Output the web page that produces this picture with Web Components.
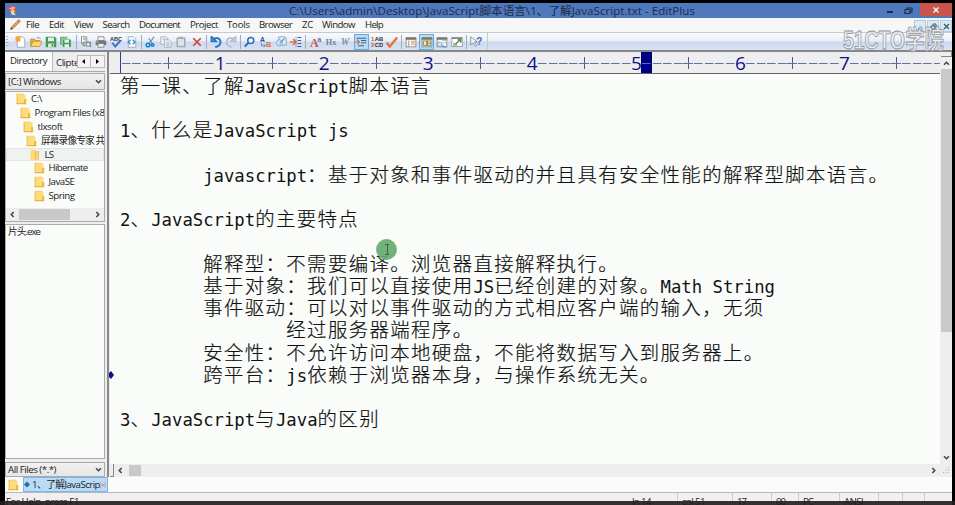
<!DOCTYPE html>
<html lang="zh-CN">
<head>
<meta charset="utf-8">
<title>EditPlus</title>
<style>
html,body{margin:0;background:#000;overflow:hidden}
body{width:955px;height:505px;font-family:"Open Sans","Noto Sans CJK SC",sans-serif;font-size:9.7px;color:#222}
</style>
</head>
<body>
<editplus-app></editplus-app>
<script>
const make = (name, html, init) => customElements.define(name, class extends HTMLElement {
  constructor(){
    super();
    const t = document.createElement('template');
    t.innerHTML = html;
    this.attachShadow({mode:'open'}).append(t.content.cloneNode(true));
  }
  connectedCallback(){ if (init && !this.ready){ this.ready = true; init(this, this.shadowRoot); } }
});

/* Label fitted to a given width, by letter spacing or (with "scale") by condensing */
make('fit-text', `<style>:host{display:inline-block;white-space:pre;flex:none}span{display:inline-block;transform-origin:0 50%}</style><span></span>`, (el, root) => {
  const s = root.querySelector('span'), w = +el.getAttribute('w');
  s.textContent = el.getAttribute('text');
  el.style.width = w + 'px';
  const own = s.getBoundingClientRect().width;
  if (el.hasAttribute('scale')) s.style.transform = `scaleX(${w / own})`;
  else s.style.letterSpacing = (w - own) / [...s.textContent].length + 'px';
});

const page = (x) => `<path d="M3 1h7l3 3v11H3z" fill="#fff" stroke="#8a9bb0"/>${x||''}`;
const win = (x) => `<rect x="1.5" y="2.5" width="13" height="12" fill="#fbfbf2" stroke="#777"/><path d="M1 2h14v3H1z" fill="#76775c"/>${x}`;
const T = (x,y,s,f,t,e) => `<text x="${x}" y="${y}" font-size="${s}" font-weight="bold" fill="${f}" ${e||''}>${t}</text>`;
const S = 'font-family="Liberation Serif"';
const ICONS = {
  new: page('<path d="M4 0v8M0 4h8M1 1l6 6M7 1L1 7" stroke="#f5a31c" stroke-width="1.5"/>'),
  open: '<path d="M1 14V4h5l1 2h6v3" fill="#e8b23d" stroke="#b5852c"/><path d="M1 14l3-7h12l-3 7z" fill="#ffd36b" stroke="#c28a24"/><path d="M9 3q3-3 5 1" fill="none" stroke="#436da8"/>',
  save: '<path d="M1 1h12l2 2v12H1z" fill="#3f9b57"/><path d="M4 2h8v5H4z" fill="#e4f5e6"/><path d="M4 10h8v5H4z" fill="#d5e9d8"/><path d="M9 11h2v3H9z" fill="#2a7139"/>',
  saveall: '<path d="M0 1h10v11H0z" fill="#70b37c"/><path d="M3 4h10l2 2v9H3z" fill="#3f9b57" stroke="#dcebdc"/><path d="M6 5h6v4H6zM6 11h6v4H6z" fill="#e5f3e6"/>',
  preview: '<path d="M2 1h7v9H2z" fill="#fff" stroke="#777"/><path d="M4 3h4M4 5h4" stroke="#888"/><path d="M4 8h10v5H4z" fill="#bbb" stroke="#777"/><circle cx="11" cy="11" r="2.5" fill="#e8f1f7" stroke="#777"/><path d="M13 13l2 2" stroke="#666"/>',
  print: '<path d="M4 1h8v5H4z" fill="#f5f5f5" stroke="#777"/><path d="M1 6h14v6H1z" fill="#73777b"/><path d="M4 10h8v5H4z" fill="#eee" stroke="#777"/><path d="M2 8h2" stroke="#ddd"/>',
  spell: T(0,7,7.5,'#36393f','ABC')+'<path d="M3 9l4 5 7-8" fill="none" stroke="#3c72c4" stroke-width="2.6"/>',
  html: page('<path d="M6 5L3 8l3 3M9 5l3 3-3 3" fill="none" stroke="#338bd0" stroke-width="1.8"/>'),
  cut: '<path d="M12 1L5 11M5 3l6 9" stroke="#6a8cb6" stroke-width="1.7"/><circle cx="4" cy="12" r="2.4" fill="none" stroke="#1682d4" stroke-width="2"/><circle cx="10" cy="12" r="1.8" fill="none" stroke="#1682d4" stroke-width="2"/>',
  copy: '<g fill="#edf1f7" stroke="#9aa7ba"><path d="M1 1h7l2 2v8H1z"/><path d="M6 5h6l3 3v7H6z"/></g><path d="M8 9h5M8 11h5M8 13h5M3 4h4" stroke="#9ab"/>',
  paste: '<path d="M3 3h10v11H3z" fill="#dfe3e9" stroke="#a6a9ae" stroke-width="2"/><path d="M5 1h6v3H5z" fill="#aaa"/>',
  delete: '<path d="M3 3l10 10M13 3L3 13" stroke="#cc4338" stroke-width="2.2"/>',
  undo: '<path d="M2 1v6h6zM4 5c5-5 10-1 10 3s-3 6-7 7" fill="none" stroke="#2978c3" stroke-width="2.6"/>',
  redo: '<path d="M14 1v6H8zM12 5C7 0 2 4 2 8s3 6 7 7" fill="none" stroke="#b4bcc9" stroke-width="2.2"/>',
  find: '<circle cx="9" cy="6" r="4" fill="#eef7ff" stroke="#286eb9" stroke-width="2"/><path d="M6 9l-5 5" stroke="#286eb9" stroke-width="2.5"/>',
  replace: T(0,8,9,'#334c82','A')+T(8,15,10,'#df724c','B')+'<path d="M2 9v4h5m-2-2l2 2-2 2" fill="none" stroke="#3474b4"/>',
  findfiles: '<path d="M5 1h8l2 2v9H5z" fill="#e2effa" stroke="#7790af"/><circle cx="6" cy="9" r="4" fill="#d9ebfa" stroke="#6490bd"/><path d="M6 10l7-7" stroke="#6fa0ca" stroke-width="2"/>',
  goto: '<path d="M0 8h7M4 4l4 4-4 4" fill="none" stroke="#e66d3b" stroke-width="2"/><path d="M10 2h5M10 6h5M10 10h5M10 14h5" stroke="#3a5d92" stroke-width="1.6"/><path d="M8 1v14" stroke="#5b79a3" stroke-dasharray="2 1"/>',
  font: T(0,15,16,'#cb514d','A',S)+T(10,8,9,'#4775b7','a'),
  hx: T(1,12,12,'#74839a','Hx',S+' textLength="14" lengthAdjust="spacingAndGlyphs"'),
  wrap: T(1,12,13,'#8090a4','W',S+' font-style="italic"'),
  indent: '<path d="M2 3h13M8 6h7M8 9h7M4 13h8" stroke="#3d648b" stroke-width="1.5"/><path d="M0 8h6M3 5l3 3-3 3" fill="none" stroke="#df6a40" stroke-width="1.5"/>',
  lines: T(0,7,8,'#d55c38','1')+T(5,7,8,'#333','AB')+T(0,15,8,'#d55c38','2')+T(5,15,8,'#333','CD'),
  check: '<path d="M1 9l4 5L15 2" fill="none" stroke="#e9733f" stroke-width="3.2"/>',
  cliptext: win('<path d="M5 6v8" stroke="#777"/><path d="M8 7h5M8 9h5M8 11h5" stroke="#d77b6c"/>'),
  dirwin: win('<path d="M3 6h10v7H3z" fill="#707451"/><path d="M4 7h3v5H4zM9 7h3v2H9zM9 10h3v2H9z" fill="#f2efb0"/>'),
  output: win('<path d="M8 6h6M8 9h6" stroke="#9ab6cc"/><circle cx="5" cy="11" r="3" fill="#d5eafa" stroke="#6b9ac8"/><path d="M8 13l5 2" stroke="#689cd1" stroke-width="2"/>'),
  browser: '<path d="M1 2h14v12H1z" fill="#fff" stroke="#888"/><path d="M1 3h14" stroke="#888" stroke-width="2"/><path d="M3 9h5v4H3z" fill="#8ab0a2"/><path d="M7 10l5-5M9 5h4v4" fill="none" stroke="#4e9a41" stroke-width="2"/>',
  help: '<path d="M1 1v11l3-3 3 5 2-1-3-5h4z" fill="#f5f7fa" stroke="#6b7e96"/>'+T(8,12,14,'#416fbd','?'),
  folder: '<path d="M2 1h10v14H2z" fill="#f4c95d"/><path d="M4 2h10v13H4z" fill="#ffdc7b"/><path d="M12 8h3v7h-3z" fill="#efb94a"/><path d="M2 14h12" stroke="#dca83c"/>',
  folderopen: '<path d="M2 1h7v14H2z" fill="#ffda75"/><path d="M8 3h5v11H8z" fill="#dfab43"/><path d="M9 2l3 2v11l-3-1z" fill="#f9d989"/>',
  pencil: '<path d="M2 14l2-4L13 1l2 2-9 9z" fill="#efae55" stroke="#77583b"/><path d="M2 14l1-3 2 2z" fill="#443"/><path d="M13 1l2 2-2 1-2-2z" fill="#d37c6d"/>',
  logo: '<path d="M1 5l5-4 8 1-1 9-7 1z" fill="#d9574d"/><path d="M3 5l6-3 3 2-4 4z" fill="#f7aaa0"/><path d="M5 9l5-2 3 8-6-1z" fill="#d8ddcc"/><path d="M10 11l4-3-1 7z" fill="#639456"/>'
};
make('ep-icon', `<style>:host{display:inline-block;width:12px;height:12px;flex:none}svg{display:block;width:100%;height:100%;font-family:"Liberation Sans",sans-serif}</style><svg viewBox="0 0 16 16"></svg>`,
  (el, root) => { root.querySelector('svg').innerHTML = ICONS[el.getAttribute('name')]; });

make('ep-arrow', `<style>:host{display:block;width:7px;height:7px;flex:none;color:#444}svg{display:block}</style><svg width="7" height="7" viewBox="0 0 7 7"><path fill="none" stroke="currentColor" stroke-width="1.5" d="M1 2.3l2.5 2.5L6 2.3"/></svg>`,
  (el, root) => { root.querySelector('svg').style.transform = `rotate(${{down:0,left:90,up:180,right:-90}[el.getAttribute('dir')]}deg)`; });

make('title-bar', `<style>
:host{display:flex;height:15px;background:#5078bc;align-items:center;color:#1d2c4a}
ep-icon{width:11px;height:11px;margin-left:2px}
fit-text{margin-left:271px;font-size:11.6px;line-height:15px}
.b{margin-left:auto;display:flex;height:15px;align-items:center}
.min{width:6px;height:2px;background:#1d2c4a;margin:3px 11px 0 0}
.x{width:32px;height:13px;background:#c9544c;display:grid;place-items:center;align-self:flex-start}
.r{margin-right:7px}
</style><ep-icon name="logo"></ep-icon><fit-text w="406" text="C:\\Users\\admin\\Desktop\\JavaScript脚本语言\\1、了解JavaScript.txt - EditPlus"></fit-text>
<div class="b"><div class="min"></div><svg class="r" width="9" height="8" viewBox="0 0 9 8"><path d="M1 2.5h5v4H1zM3 2V1h5v4H6" fill="none" stroke="#1d2c4a" stroke-width="1.2"/></svg>
<div class="x"><svg width="6" height="6" viewBox="0 0 6 6"><path d="M.5.5l5 5M5.5.5l-5 5" stroke="#fff" stroke-width="1.3"/></svg></div></div>`);

make('menu-bar', `<style>
:host{display:flex;height:14px;background:#f5f6f5;align-items:center;line-height:14px;font-size:9.6px}
ep-icon{margin:0 5px 0 4px}
nav{display:flex}
fit-text{margin-right:var(--g)}
.w{margin-left:auto;display:flex;gap:1px;align-self:flex-end}
.w div{width:12px;height:12px;background:#d9eaf8;border:1px solid #b5cadb;box-sizing:border-box;display:grid;place-items:center}
</style><ep-icon name="pencil"></ep-icon><nav></nav>
<div class="w"><div><svg width="7" height="7"><path d="M1 6h4" stroke="#456" stroke-width="1.3"/></svg></div><div><svg width="7" height="7"><path d="M1 3h4v3H1zM3 3V1h3v3H5" fill="none" stroke="#456"/></svg></div><div><svg width="7" height="7"><path d="M1 1l5 5M6 1L1 6" stroke="#456" stroke-width="1.3"/></svg></div></div>`,
(el, root) => {
  const m = [['File',26,13],['Edit',49,15],['View',74,19],['Search',102.5,27],['Document',139,41],['Project',190,28],['Tools',227,23],['Browser',259,33],['ZC',302,11],['Window',322,33],['Help',365,18]];
  root.querySelector('nav').innerHTML = m.map(([t,x,w],i) => `<fit-text text="${t}" w="${w}" style="--g:${i<10 ? m[i+1][1]-x-w : 0}px"></fit-text>`).join('');
});

make('tool-bar', `<style>
:host{display:flex;align-items:center;background:linear-gradient(#fafbfd,#e9eef8 45%,#cedaee 55%,#d8e2f2);border-top:1px solid #c5c9d0;border-bottom:2px solid #858789;height:17px}
.grip{width:2px;height:12px;margin:0 4.9px 0 1px;background:repeating-linear-gradient(#a7b3c7 0 1px,transparent 1px 3px)}
.c{width:15.29px;height:16px;display:grid;place-items:center;flex:none}
.on{background:#b8daf7;box-shadow:inset 0 0 0 1px #69aae2}
.s{width:1px;height:14px;background:#a2abba;margin:0 1.5px}
.bar{display:flex;align-items:center;border-right:1px solid #c4cbd8;padding-right:3px;height:17px}
</style><div class="grip"></div><div class="bar"></div>`, (el, root) => {
  const g = 'new open save saveall|preview print spell html|cut copy paste delete|undo redo|find replace findfiles goto|font hx wrap indent* lines check|cliptext dirwin* output browser|help';
  root.querySelector('.bar').innerHTML = g.split('|').map(s => s.split(' ').map(n => `<div class="c ${n.endsWith('*')?'on':''}"><ep-icon name="${n.replace('*','')}"></ep-icon></div>`).join('')).join('<div class="s"></div>');
});

make('drop-box', `<style>:host{display:flex;align-items:center;justify-content:space-between;border:1px solid #aaa;background:linear-gradient(#f1f1f1,#e6e6e6);box-sizing:border-box;padding:0 2px}</style><slot></slot><ep-arrow dir="down"></ep-arrow>`);

make('side-panel', `<style>
:host{display:flex;flex-direction:column;width:100px;flex:none;background:#eee;overflow:hidden}
.tabs{display:flex;height:20px;margin-bottom:1px;align-items:flex-end;border-bottom:1px solid #aaa;box-sizing:border-box}
.t1{width:48px;height:19px;background:#fbfcfb;border-right:1px solid #bbb;padding-left:5px;box-sizing:border-box;line-height:18px}
.t2{width:24px;height:17px;padding-left:3px;overflow:hidden;line-height:17px;box-sizing:border-box}
.n{width:14px;height:13px;border:1px solid #bbb;box-sizing:border-box;display:grid;place-items:center;margin-bottom:3px;background:#f4f4f4}
.n+.n{border-left:0}
drop-box{height:17px;flex:none}
.tree{height:131px;background:#fafcfa;border:1px solid #aaa;box-sizing:border-box;margin-top:1px;display:flex;flex-direction:column;overflow:hidden}
.row{height:13.9px;flex:none;display:flex;align-items:center;overflow:hidden;line-height:14px}
.row ep-icon{margin-right:4px}
.sel{background:#f0f2f1;box-shadow:inset 0 0 0 1px #e3e5e4}
.hs{margin-top:auto;height:13px;display:flex;align-items:center;background:#eee}
.hs ep-arrow{margin:0 3px}.hs i{width:51px;height:11px;background:#c9c9c9;margin-right:auto}
.files{flex:1;background:#fafcfa;border:1px solid #aaa;margin:2px 0 3px;padding:1px 2px;line-height:12px}
</style>
<div class="tabs"><div class="t1"><fit-text text="Directory" w="37"></fit-text></div><div class="t2"><fit-text text="Clipte" w="23"></fit-text></div><div class="n"><svg width="4" height="5"><path d="M3 0v5L0 2.5z"/></svg></div><div class="n"><svg width="4" height="5"><path d="M0 0v5l3-2.5z"/></svg></div></div>
<drop-box><fit-text text="[C:] Windows" w="53"></fit-text></drop-box>
<div class="tree"></div>
<div class="files"><fit-text text="片头.exe" w="32"></fit-text></div>
<drop-box style="height:15px"><fit-text text="All Files (*.*)" w="48"></fit-text></drop-box>`, (el, root) => {
  const rows = [['C:\\',9,11],['Program Files (x8',12.5,70],['tlxsoft',15.5,25],['屏幕录像专家 共享',19,72],['LS',22.500,9],['Hibernate',26.500,39],['JavaSE',26.500,26],['Spring',26.500,26]];
  root.querySelector('.tree').innerHTML = rows.map(([t,x,w],i) => `<div class="row ${i==4?'sel':''}"><ep-icon style="margin-left:${x}px" name="${i==4?'folderopen':'folder'}"></ep-icon><fit-text text="${t}" w="${w}"></fit-text></div>`).join('')
   + '<div class="hs"><ep-arrow dir="left"></ep-arrow><i></i><ep-arrow dir="right"></ep-arrow></div>';
});

make('edit-ruler', `<style>
:host{display:grid;grid-template-columns:repeat(79,10.41px);height:22px;margin-left:10px;border-left:1px solid #333a9c;overflow:hidden;color:#10108a;font:19px/22px "Open Sans",sans-serif;box-sizing:border-box}
i{background:linear-gradient(#6a6aaa,#6a6aaa) 1px 11px/8.6px 1px no-repeat}
.p{background:linear-gradient(#6a6aaa,#6a6aaa) 0 11px/10.4px 1px no-repeat,linear-gradient(#5555a0,#5555a0) 5px 5px/1px 12px no-repeat}
.c{background-color:#000083}
b{font-weight:500;text-align:center;display:block}
</style>`, (el, root) => {
  for (let n = 0; n < 79; n++) {
    const c = document.createElement(n % 10 == 9 ? 'b' : 'i');
    if (n % 10 == 9) c.textContent = (n + 1) / 10;
    if (n % 10 == 4) c.className = 'p';
    if (n == 50) c.className = 'c';
    root.append(c);
  }
});

/* One line of source: half-width cells of 10.4px, full-width cells of 20.8px */
make('code-line', `<style>
:host{display:block;height:22.23px;line-height:22.23px;white-space:pre;color:#111;font-family:"DejaVu Sans Mono",monospace;font-size:17.28px}
.z{font-family:"Noto Sans CJK SC",sans-serif;font-size:19.4px;font-weight:300;letter-spacing:1.4px;line-height:1px;-webkit-text-stroke:.2px #111}
</style><span></span>`, (el, root) => {
  root.querySelector('span').innerHTML = el.textContent.replace(/[\u3000-\u9fff\uff00-\uffef]+/g, m => `<span class="z">${m}</span>`);
});

make('edit-pane', `<style>
:host{display:grid;grid-template-columns:1fr 12px;grid-template-rows:22px 1fr 13px;flex:1;min-width:0;background:#fafcfa;position:relative}
.r{background:#eee;border-bottom:1px solid #666;min-width:0;overflow:hidden}
.doc{padding:2px 0 0 10px;overflow:hidden}
.v{grid-column:2;grid-row:1/3;background:#eee;display:flex;flex-direction:column;align-items:center}
.v u{height:4px;width:10px;border:1px solid #888;border-width:0 1px 1px 0;flex:none}
.v i{width:11px;height:263px;background:#c9c9c9;margin:2px 0 auto}
.h{background:#eee;display:flex;align-items:center}
.h i{width:12px;height:11px;background:#c9c9c9;margin:0 auto 0 2px}
.h ep-arrow{margin:0 3px}
.h b{width:3px;height:12px;border:1px solid #888;border-width:0 1px 1px 0}
.k{background:#eee;display:grid;place-items:center}
.m{position:absolute;left:-1px;top:319px}
.p{position:absolute;left:266px;top:187px}
</style>
<div class="r"><edit-ruler></edit-ruler></div>
<div class="v"><u></u><ep-arrow dir="up" style="margin-top:3px"></ep-arrow><i></i><ep-arrow dir="down" style="margin-bottom:3px"></ep-arrow></div>
<div class="doc"></div>
<div class="h"><b></b><ep-arrow dir="left"></ep-arrow><i></i><ep-arrow dir="right"></ep-arrow></div>
<div class="k"><svg width="7" height="7" fill="#aaa"><path d="M5 0h1v1H5zM5 2.500h1v1H5zM5 5h1v1H5zM2.500 2.500h1v1h-1zM2.500 5h1v1h-1zM0 5h1v1H0z"/></svg></div>
<svg class="m" width="6" height="8"><path d="M0 2l2-2 3 4-3 4-2-2z" fill="#11117c"/></svg>
<svg class="p" width="21" height="21"><circle cx="10.500" cy="10.500" r="10.400" fill="#64ab6b" fill-opacity=".92"/><path d="M9 5.500h2M13 5.500h-2M11.500 5.500v10M9 15.500h2M13 15.500h-2" fill="none" stroke="#42634a"/></svg>`, (el, root) => {
  const tab = ' '.repeat(8);
  const lines = ['第一课、了解JavaScript脚本语言','','1、什么是JavaScript js','',tab+'javascript：基于对象和事件驱动的并且具有安全性能的解释型脚本语言。','','2、JavaScript的主要特点','',
    tab+'解释型：不需要编译。浏览器直接解释执行。',tab+'基于对象：我们可以直接使用JS已经创建的对象。Math String',tab+'事件驱动：可以对以事件驱动的方式相应客户端的输入，无须',tab+tab+'经过服务器端程序。',
    tab+'安全性：不允许访问本地硬盘，不能将数据写入到服务器上。',tab+'跨平台：js依赖于浏览器本身，与操作系统无关。','','3、JavaScript与Java的区别'];
  for (const l of lines) { const c = document.createElement('code-line'); c.textContent = l; root.querySelector('.doc').append(c); }
});

make('doc-tabs', `<style>
:host{display:flex;height:16px;background:#fafcfa;border-bottom:1px solid #b5b8c0;align-items:center;box-sizing:border-box}
:host>ep-icon{margin:0 4px 0 2px}
.t{height:15px;width:85px;box-sizing:border-box;background:#b9dbf7;border:1px solid #82b5e4;display:flex;align-items:center;line-height:13px}
</style><ep-icon name="folder"></ep-icon><div class="t"><svg width="7" height="7"><path d="M3 0.500l3 3-3 3-3-3z" fill="#2b7196"/></svg><fit-text text="1、了解JavaScrip" w="68" style="margin-left:1px"></fit-text><svg width="6" height="6"><path d="M0 0l6 6M6 0L0 6M0 3h6" stroke="#db9aa5"/></svg></div>`);

make('status-bar', `<style>
:host{display:flex;height:12px;background:#eff0ef;line-height:17px;overflow:hidden;color:#222}
.f{flex:1;padding-left:1px}
.c{box-sizing:border-box;border-right:1px solid #ccc;padding-left:4px;flex:none}
</style><div class="f"><fit-text text="For Help, press F1" w="73"></fit-text></div>
<div class="c" style="width:50px"><fit-text text="ln 14" w="19"></fit-text></div><div class="c" style="width:55px"><fit-text text="col 51" w="23"></fit-text></div><div class="c" style="width:39px"><fit-text text="17" w="9"></fit-text></div><div class="c" style="width:27px"><fit-text text="00" w="9"></fit-text></div><div class="c" style="width:41px"><fit-text text="PC" w="10"></fit-text></div><div class="c" style="width:39px"><fit-text text="ANSI" w="19"></fit-text></div><div class="c" style="width:24px"></div><div class="c" style="width:22px"></div><div class="c" style="width:27px;border:0"></div>`);

make('editplus-app', `<style>
:host{display:flex;flex-direction:column;box-sizing:border-box;width:955px;height:505px;padding:3px 3px 0 5px;position:relative;overflow:hidden}
title-bar,menu-bar,tool-bar,doc-tabs,status-bar{flex:none}
.main{display:flex;height:425px;flex:none;background:#eee}
.split{width:4px;flex:none;background:#eee;border-right:2px solid #888;box-sizing:border-box;margin-right:1px}
.wm{position:absolute;left:843px;top:25px;font:bold 26px/30px "Liberation Sans","Noto Sans CJK SC",sans-serif;color:#eceef2aa;-webkit-text-stroke:.8px #8d9096}
.shade{position:absolute;left:0;top:501px;width:955px;height:4px;background:#221e20e8}
</style>
<title-bar></title-bar><menu-bar></menu-bar><tool-bar></tool-bar>
<div class="main"><side-panel></side-panel><div class="split"></div><edit-pane></edit-pane></div>
<doc-tabs></doc-tabs><status-bar></status-bar>
<fit-text class="wm" text="51CTO学院" w="101" scale></fit-text><div class="shade"></div>`);
</script>
</body>
</html>
